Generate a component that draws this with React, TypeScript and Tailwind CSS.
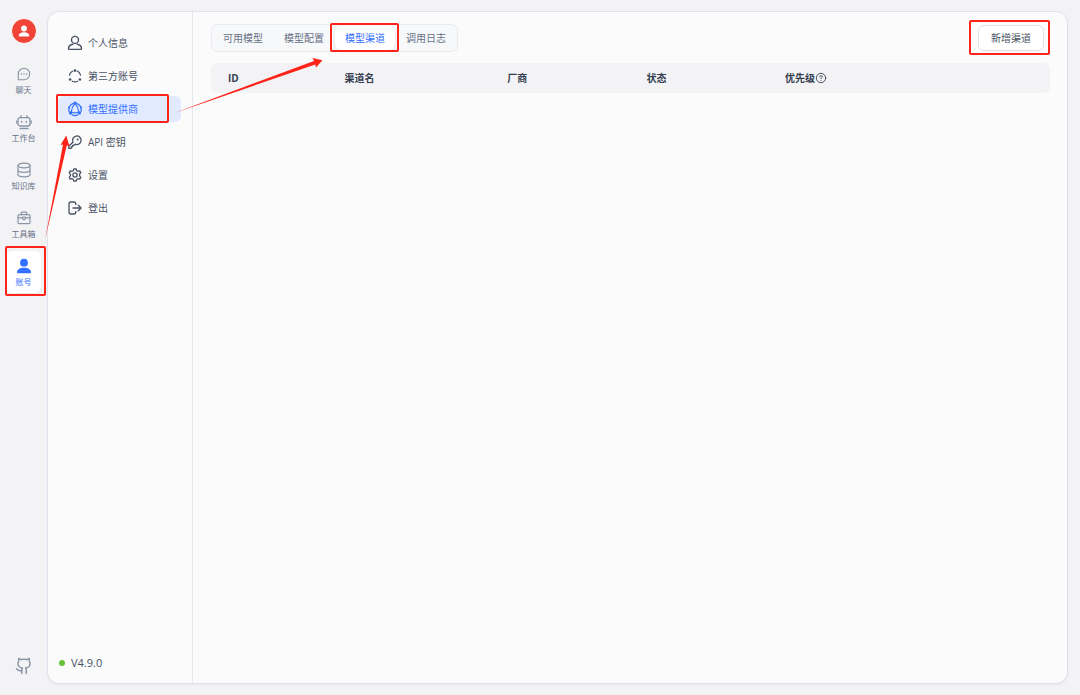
import type { ReactNode } from 'react';

const line = {
  fill: 'none',
  stroke: 'currentColor',
  strokeLinecap: 'round',
  strokeLinejoin: 'round',
} as const;

function PersonSolid({ className }: { className: string }) {
  return (
    <svg viewBox="0 0 16 16" className={className} fill="currentColor" aria-hidden="true">
      <circle cx="8" cy="4.700" r="3.900" />
      <path d="M1.800 15.200c-.5 0-.8-.4-.8-.8 0-3 2.700-4.700 7-4.700s7 1.700 7 4.700c0 .4-.3.8-.8.8z" />
    </svg>
  );
}

const railIcons: Record<string, ReactNode> = {
  chat: (
    <svg viewBox="0 0 16 16" className="size-4" {...line} strokeWidth="1.1" aria-hidden="true">
      <path d="M2.300 13.500V8A5.700 5.700 0 1 1 8 13.700H2.600z" />
      <path d="M5.300 8h.1M8 8h.1M10.700 8h.1" strokeWidth="1.500" />
    </svg>
  ),
  robot: (
    <svg viewBox="0 0 16 16" className="size-4" {...line} strokeWidth="1.300" aria-hidden="true">
      <rect x="2" y="3.700" width="12" height="8.300" rx="2" />
      <path d="M5 3.700V1.700M11 3.700V1.700M.8 7v2M15.200 7v2M4 14.500h8" />
      <path d="M5.700 7.500v.6M10.300 7.500v.6" strokeWidth="1.600" />
    </svg>
  ),
  database: (
    <svg viewBox="0 0 16 16" className="size-4" {...line} strokeWidth="1.200" aria-hidden="true">
      <ellipse cx="8" cy="3.500" rx="6" ry="2.300" />
      <path d="M2 3.500v9c0 1.300 2.700 2.300 6 2.300s6-1 6-2.300v-9" />
      <path d="M2 8c0 1.300 2.700 2.300 6 2.300S14 9.300 14 8" />
    </svg>
  ),
  toolbox: (
    <svg viewBox="0 0 16 16" className="size-4" {...line} strokeWidth="1.200" aria-hidden="true">
      <rect x="2" y="4.700" width="12" height="9" rx="1.200" />
      <path d="M5.300 4.700V3.200c0-.6.400-1 1-1h3.400c.6 0 1 .4 1 1v1.500M2 7.800h4.500M9.500 7.800H14M6.600 7h2.800v1.800L8 9.900 6.600 8.800z" />
    </svg>
  ),
  account: <PersonSolid className="size-4" />,
};

const menuIcons: Record<string, ReactNode> = {
  user: (
    <svg viewBox="0 0 16 16" className="size-4" {...line} strokeWidth="1.400" aria-hidden="true">
      <circle cx="8" cy="4.900" r="3.500" />
      <path d="M5.700 9.300C3.200 9.900 1.500 11.600 1.500 13.600c0 .5.3.8.8.8h11.400c.5 0 .8-.3.8-.8 0-2-1.700-3.700-4.200-4.300" />
    </svg>
  ),
  link: (
    <svg viewBox="0 0 16 16" className="size-4" {...line} strokeWidth="1.200" aria-hidden="true">
      <path d="M5.800 3A5.600 5.600 0 0 0 2.500 7.200M10.200 3a5.600 5.600 0 0 1 3.300 4.200M5.300 13.200a5.600 5.600 0 0 0 5.400 0" />
      <g fill="currentColor" stroke="none">
        <circle cx="8" cy="2.600" r="1.300" />
        <circle cx="3.100" cy="11.500" r="1.300" />
        <circle cx="12.900" cy="11.500" r="1.300" />
      </g>
    </svg>
  ),
  model: (
    <svg viewBox="0 0 16 16" className="size-4" {...line} strokeWidth="1.200" aria-hidden="true">
      <path d="M5.800 2.600A6 6 0 0 0 2.300 6M10.200 2.600A6 6 0 0 1 13.700 6M5.400 13.900a6 6 0 0 0 5.200 0" />
      <path d="M1.900 7.200v3.200M14.100 7.200v3.200M7.300 3.300C5.500 5.200 4.500 7.600 4.300 10.800M8.700 3.300c1.800 1.900 2.800 4.300 3 7.500M5 11.300c2 .8 4 .8 6 0" />
      <g fill="currentColor" stroke="none">
        <circle cx="8" cy="2.200" r="1.700" />
        <circle cx="3.600" cy="12" r="1.700" />
        <circle cx="12.400" cy="12" r="1.700" />
        <circle cx="2" cy="6.500" r="1" />
        <circle cx="14" cy="6.500" r="1" />
      </g>
    </svg>
  ),
  key: (
    <svg viewBox="0 0 16 16" className="size-4" {...line} strokeWidth="1.300" aria-hidden="true">
      <path d="M6 8.200A4.300 4.300 0 1 1 8.100 10.200L7 11.300H5.600v1.500H4.200v1.500H1.800v-2.200z" />
      <circle cx="10.600" cy="5.500" r="1" fill="currentColor" stroke="none" />
    </svg>
  ),
  gear: (
    <svg viewBox="0 0 16 16" className="size-4" {...line} strokeWidth="1.300" aria-hidden="true">
      <path d="M6.900 1.800h2.200l.5 1.700 1.300.8 1.800-.5 1.100 1.900-1.200 1.400v1.800l1.200 1.400-1.100 1.900-1.800-.5-1.300.8-.5 1.700H6.900l-.5-1.700-1.300-.8-1.800.5-1.100-1.900 1.200-1.400V7.100L2.200 5.700l1.100-1.900 1.800.5 1.300-.8z" />
      <circle cx="8" cy="8" r="2.100" />
    </svg>
  ),
  logout: (
    <svg viewBox="0 0 16 16" className="size-4" {...line} strokeWidth="1.300" aria-hidden="true">
      <path d="M8.800 4.500V4c0-1.200-.8-2-2-2H4C2.800 2 2 2.800 2 4v8c0 1.200.8 2 2 2h2.800c1.200 0 2-.8 2-2v-.5" />
      <path d="M6 8h8M11.300 5.200 14.100 8l-2.800 2.800" />
    </svg>
  ),
};

const railItems = [
  { icon: 'chat', label: '聊天' },
  { icon: 'robot', label: '工作台' },
  { icon: 'database', label: '知识库' },
  { icon: 'toolbox', label: '工具箱' },
  { icon: 'account', label: '账号', active: true },
];

const menuItems = [
  { icon: 'user', label: '个人信息' },
  { icon: 'link', label: '第三方账号' },
  { icon: 'model', label: '模型提供商', active: true },
  { icon: 'key', label: 'API 密钥' },
  { icon: 'gear', label: '设置' },
  { icon: 'logout', label: '登出' },
];

const tabs = ['可用模型', '模型配置', '模型渠道', '调用日志'];

function Highlight({ className }: { className: string }) {
  return (
    <span
      aria-hidden="true"
      className={`pointer-events-none absolute z-10 rounded-xs border-2 border-[#fc2419] ${className}`}
    />
  );
}

export default function App() {
  return (
    <div className="relative flex min-h-screen bg-[#f3f3f6] font-['Open_Sans','Noto_Sans_CJK_SC',sans-serif] text-[10px] text-[#485264]">
      <aside className="flex w-[47px] shrink-0 flex-col items-center pt-[18px] pb-5">
        <button
          aria-label="头像"
          className="flex size-[26px] items-center justify-center rounded-full border border-white bg-[#f04438] text-white"
        >
          <PersonSolid className="size-3" />
        </button>
        <nav className="mt-[15px] flex flex-col gap-1.5">
          {railItems.map((item) => (
            <a
              key={item.label}
              href="#"
              className={`relative flex h-[42px] w-[35px] flex-col items-center justify-end gap-0.5 rounded-md pb-[5px] text-[8px] leading-3 ${
                item.active ? 'bg-white text-[#3370ff] shadow-xs' : 'text-[#8a95a7]'
              }`}
            >
              {railIcons[item.icon]}
              <span className={item.active ? '' : 'text-[#667085]'}>{item.label}</span>
              {item.active && <Highlight className="-top-[5px] -right-[5px] -bottom-[3px] -left-px" />}
            </a>
          ))}
        </nav>
        <a href="#" aria-label="GitHub" className="mt-auto text-[#8a95a7]">
          <svg viewBox="0 0 24 24" className="size-[18px]" {...line} strokeWidth="2" aria-hidden="true">
            <path d="M15 22v-4a4.800 4.800 0 0 0-1-3.500c3 0 6-2 6-5.500.080-1.250-.270-2.480-1-3.500.280-1.150.280-2.350 0-3.500 0 0-1 0-3 1.500-2.640-.5-5.360-.5-8 0C6 2 5 2 5 2c-.3 1.150-.3 2.350 0 3.500A5.403 5.403 0 0 0 4 9c0 3.500 3 5.500 6 5.500-.390.490-.680 1.050-.850 1.650-.170.600-.220 1.230-.150 1.850v4" />
            <path d="M9 18c-4.510 2-5-2-7-2" />
          </svg>
        </a>
      </aside>

      <main className="mt-[11px] mr-3 mb-[11px] flex min-w-0 flex-1 rounded-xl border border-[#dfe2ec] bg-[#fbfbfc] shadow-xs">
        <div className="flex w-[145px] shrink-0 flex-col border-r border-[#e4e7ee] pt-[18px] pr-[11px] pb-3 pl-2.5">
          <nav className="flex flex-col gap-[7px]">
            {menuItems.map((item) => (
              <a
                key={item.label}
                href="#"
                className={`relative flex h-[26px] items-center gap-[5px] rounded-md pl-[9px] ${
                  item.active ? 'bg-[#e1eaff] text-[#3370ff]' : ''
                }`}
              >
                {menuIcons[item.icon]}
                <span>{item.label}</span>
                {item.active && <Highlight className="-top-0.5 right-3 -bottom-px -left-0.5" />}
              </a>
            ))}
          </nav>
          <div className="mt-auto flex items-center gap-1.5 pl-px text-[11px] leading-4">
            <span className="size-1.5 rounded-full bg-[#67c13b]" />
            V4.9.0
          </div>
        </div>

        <section className="min-w-0 flex-1 pt-3 pr-[17px] pl-[18px]">
          <div className="flex items-center justify-between">
            <div role="tablist" className="grid h-7 grid-cols-4 gap-px rounded-md border border-[#e8ebf0] bg-[#f7f8fa] p-px">
              {tabs.map((tab) => {
                const active = tab === '模型渠道';
                return (
                  <button
                    key={tab}
                    role="tab"
                    aria-selected={active}
                    className={`relative w-[60px] rounded-md ${
                      active ? 'bg-white text-[#3370ff] shadow-sm' : 'text-[#667085]'
                    }`}
                  >
                    {tab}
                    {active && <Highlight className="-top-[3px] -right-1 -bottom-0.5 -left-[5px]" />}
                  </button>
                );
              })}
            </div>
            <button className="relative mr-1.5 h-[26px] rounded-md border border-[#dfe2ea] bg-white px-3">
              新增渠道
              <Highlight className="-top-1.5 -right-[7px] -bottom-[5px] -left-2.5" />
            </button>
          </div>

          <table className="mt-[11px] w-full table-fixed text-left">
            <thead>
              <tr className="h-[30px] bg-[#f3f3f5] text-[#343e50]">
                <th className="w-[14%] rounded-l-md pl-[17px]">ID</th>
                <th className="w-[19.4%] pl-4">渠道名</th>
                <th className="w-[16.6%] pl-4">厂商</th>
                <th className="w-[16.4%] pl-4">状态</th>
                <th className="rounded-r-md pl-[17px]">
                  <span className="flex items-center">
                    优先级
                    <svg viewBox="0 0 12 12" className="size-3" {...line} strokeWidth=".9" aria-hidden="true">
                      <circle cx="6" cy="6" r="4.700" />
                      <path d="M4.700 4.900c0-.8.600-1.300 1.300-1.300s1.300.5 1.300 1.200c0 .9-1.300 1-1.300 1.900M6 8.300v.1" />
                    </svg>
                  </span>
                </th>
              </tr>
            </thead>
            <tbody />
          </table>
        </section>
      </main>

      <svg
        className="pointer-events-none absolute top-0 left-0 z-20 h-[300px] w-[400px]"
        viewBox="0 0 400 300"
        fill="#fc2419"
        aria-hidden="true"
      >
        <path d="M45 240 63 144.500 60.500 145 66.300 135.500 69.500 146.500 66.800 145.200z" />
        <path d="M173 113.500 314 61 312.500 58 322.500 60.200 316 67.500 315.200 64.500z" />
      </svg>
    </div>
  );
}
